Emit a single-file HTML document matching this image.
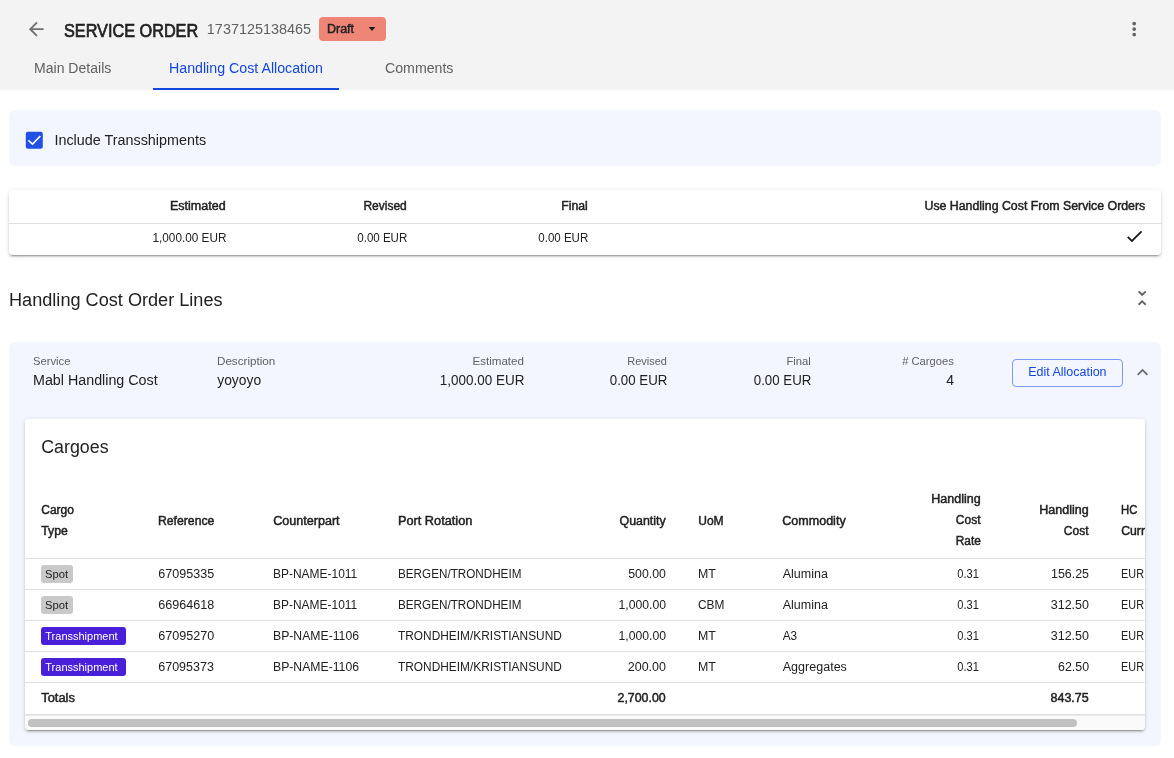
<!DOCTYPE html>
<html><head><meta charset="utf-8">
<style>
*{box-sizing:border-box;margin:0;padding:0}
html,body{width:1174px;height:758px;overflow:hidden;background:#fff;font-family:"Liberation Sans",sans-serif;color:#212121}
.abs{position:absolute}
.t{position:absolute;white-space:nowrap;line-height:20px;height:20px}
.clip{position:absolute;left:0;top:0;width:1145px;height:758px;overflow:hidden;will-change:transform}
</style></head><body>
<div class="abs" style="left:0;top:0;width:1174px;height:90px;background:#f3f3f3"></div>
<svg class="abs" style="left:25px;top:18px" width="23" height="23"><g transform="translate(0.3 0.2) scale(0.9167)"><path d="M20 11H7.83l5.59-5.59L12 4l-8 8 8 8 1.41-1.41L7.83 13H20v-2z" fill="#707070"/></g></svg>
<div class="abs" style="left:319px;top:17px;width:67px;height:24px;background:#ee8577;border-radius:4px"></div>
<svg class="abs" style="left:367px;top:26px" width="10" height="6" viewBox="0 0 10 6"><path d="M1.7 1.1h6.6L5 5.1z" fill="#1c1c1c"/></svg>
<svg class="abs" style="left:1123px;top:18px" width="23" height="23"><g transform="translate(0.2 0.1) scale(0.9167)"><circle cx="12" cy="6" r="2" fill="#626262"/><circle cx="12" cy="12" r="2" fill="#626262"/><circle cx="12" cy="18" r="2" fill="#626262"/></g></svg>
<div class="abs" style="left:153px;top:88px;width:186px;height:2px;background:#1247e2"></div>
<div class="abs" style="left:9px;top:110px;width:1152px;height:56px;background:#f3f6fe;border-radius:6px"></div>
<svg class="abs" style="left:25px;top:131px" width="18" height="18"><g transform="translate(0.8 0.8) scale(0.9444)"><rect width="18" height="18" rx="2.2" fill="#2050e6"/><path d="M2.7 9.1L7.1 13.1 15.4 4.5" stroke="#fff" stroke-width="1.7" fill="none"/></g></svg>
<div class="abs" style="left:9px;top:190px;width:1152px;height:65px;background:#fff;border-radius:4px;box-shadow:0 3px 1px -2px rgba(0,0,0,.2),0 2px 2px 0 rgba(0,0,0,.14),0 1px 5px 0 rgba(0,0,0,.12)"></div>
<div class="abs" style="left:9px;top:223px;width:1152px;height:1px;background:#e0e0e0"></div>
<svg class="abs" style="left:1124px;top:226px" width="22" height="22"><g transform="translate(0.2 0) scale(0.8542)"><path d="M9 16.17L4.83 12l-1.42 1.41L9 19 21 7l-1.41-1.41z" fill="#151515"/></g></svg>
<svg class="abs" style="left:1131px;top:287px" width="23" height="23"><g transform="translate(0.15 0.05) scale(0.9167)"><path d="M7.41 18.59L8.83 20 12 16.83 15.17 20l1.41-1.41L12 14l-4.59 4.59zm9.18-13.18L15.17 4 12 7.17 8.83 4 7.41 5.41 12 10l4.59-4.59z" fill="#636363"/></g></svg>
<div class="abs" style="left:9px;top:342px;width:1152px;height:404px;background:#f3f6fe;border-radius:6px"></div>
<div class="abs" style="left:1012px;top:359px;width:111px;height:28px;border:1px solid #7b9af0;border-radius:4px"></div>
<svg class="abs" style="left:1131px;top:361px" width="23" height="23"><g transform="translate(0.55 0.3) scale(0.9167)"><path d="M7.41 15.41L12 10.83l4.59 4.58L18 14l-6-6-6 6z" fill="#6b6b6b"/></g></svg>
<div class="abs" style="left:25px;top:419px;width:1120px;height:311px;background:#fff;border-radius:4px;box-shadow:0 3px 1px -2px rgba(0,0,0,.2),0 2px 2px 0 rgba(0,0,0,.14),0 1px 5px 0 rgba(0,0,0,.12)"></div>
<div class="abs" style="left:25px;top:558px;width:1120px;height:1px;background:#e0e0e0"></div>
<div class="abs" style="left:41px;top:565px;width:32px;height:18px;background:#c9c9c9;border-radius:3px"></div>
<div class="abs" style="left:25px;top:589px;width:1120px;height:1px;background:#e0e0e0"></div>
<div class="abs" style="left:41px;top:596px;width:32px;height:18px;background:#c9c9c9;border-radius:3px"></div>
<div class="abs" style="left:25px;top:620px;width:1120px;height:1px;background:#e0e0e0"></div>
<div class="abs" style="left:41px;top:627px;width:85px;height:18px;background:#4a1fd9;border-radius:3px"></div>
<div class="abs" style="left:25px;top:651px;width:1120px;height:1px;background:#e0e0e0"></div>
<div class="abs" style="left:41px;top:658px;width:85px;height:18px;background:#4a1fd9;border-radius:3px"></div>
<div class="abs" style="left:25px;top:682px;width:1120px;height:1px;background:#e0e0e0"></div>
<div class="abs" style="left:25px;top:714px;width:1120px;height:1px;background:#e0e0e0"></div>
<div class="abs" style="left:25px;top:715px;width:1120px;height:1px;background:#ebebeb;z-index:1"></div>
<div class="abs" style="left:25px;top:715px;width:1120px;height:15px;background:#fafafa;border-radius:0 0 4px 4px"></div>
<div class="abs" style="left:28px;top:719px;width:1049px;height:8px;background:#c1c1c1;border-radius:4px"></div>
<div class="clip">
<div class="t" id="t0" style="top:21px;font-size:18px;color:#212121;font-weight:500;left:63.6px;transform:translateX(0.03px) scaleX(0.9021);transform-origin:left center;-webkit-text-stroke:0.68px currentColor;">SERVICE ORDER</div>
<div class="t" id="t1" style="top:19px;font-size:14px;color:#616161;left:207px;transform:translateX(-0.14px) scaleX(1.0287);transform-origin:left center;">1737125138465</div>
<div class="t" id="t2" style="top:19px;font-size:12px;color:#212121;font-weight:500;left:327px;transform:translateX(-0.03px) scaleX(1.0392);transform-origin:left center;-webkit-text-stroke:0.46px currentColor;">Draft</div>
<div class="t" id="t3" style="top:58px;font-size:14px;color:#616161;left:34px;transform:translateX(-0.00px) scaleX(1.0033);transform-origin:left center;">Main Details</div>
<div class="t" id="t4" style="top:58px;font-size:14px;color:#1247e2;left:169px;transform:translateX(-0.01px) scaleX(1.0150);transform-origin:left center;">Handling Cost Allocation</div>
<div class="t" id="t5" style="top:58px;font-size:14px;color:#616161;left:385px;transform:translateX(-0.01px) scaleX(1.0113);transform-origin:left center;">Comments</div>
<div class="t" id="t6" style="top:130px;font-size:14px;color:#212121;left:54.5px;transform:translateX(-0.53px) scaleX(1.0256);transform-origin:left center;">Include Transshipments</div>
<div class="t" id="t7" style="top:196px;font-size:12px;color:#212121;font-weight:500;right:919px;transform:translateX(-0.73px) scaleX(1.0431);transform-origin:right center;-webkit-text-stroke:0.46px currentColor;">Estimated</div>
<div class="t" id="t8" style="top:196px;font-size:12px;color:#212121;font-weight:500;right:738px;transform:translateX(-0.25px) scaleX(1.0000);transform-origin:right center;-webkit-text-stroke:0.46px currentColor;">Revised</div>
<div class="t" id="t9" style="top:196px;font-size:12px;color:#212121;font-weight:500;right:557px;transform:translateX(-0.24px) scaleX(1.0202);transform-origin:right center;-webkit-text-stroke:0.46px currentColor;">Final</div>
<div class="t" id="t10" style="top:196px;font-size:12px;color:#212121;font-weight:500;right:0px;transform:translateX(0.50px) scaleX(1.0281);transform-origin:right center;-webkit-text-stroke:0.46px currentColor;">Use Handling Cost From Service Orders</div>
<div class="t" id="t11" style="top:228px;font-size:12px;color:#212121;right:919px;transform:translateX(-0.01px) scaleX(0.9797);transform-origin:right center;">1,000.00 EUR</div>
<div class="t" id="t12" style="top:228px;font-size:12px;color:#212121;right:738px;transform:translateX(0.23px) scaleX(0.9608);transform-origin:right center;">0.00 EUR</div>
<div class="t" id="t13" style="top:228px;font-size:12px;color:#212121;right:557px;transform:translateX(0.23px) scaleX(0.9608);transform-origin:right center;">0.00 EUR</div>
<div class="t" id="t14" style="top:290px;font-size:18px;color:#212121;left:9px;transform:translateX(-0.01px) scaleX(1.0071);transform-origin:left center;">Handling Cost Order Lines</div>
<div class="t" id="t15" style="top:351px;font-size:11px;color:#616161;left:33px;transform:translateX(-0.01px) scaleX(1.0210);transform-origin:left center;">Service</div>
<div class="t" id="t16" style="top:370px;font-size:14px;color:#212121;left:33px;transform:translateX(-0.02px) scaleX(1.0206);transform-origin:left center;">Mabl Handling Cost</div>
<div class="t" id="t17" style="top:351px;font-size:11px;color:#616161;left:217px;transform:translateX(-0.05px) scaleX(1.0608);transform-origin:left center;">Description</div>
<div class="t" id="t18" style="top:370px;font-size:14px;color:#212121;left:217px;transform:translateX(0.25px) scaleX(0.9886);transform-origin:left center;">yoyoyo</div>
<div class="t" id="t19" style="top:351px;font-size:11px;color:#616161;right:621px;transform:translateX(0.04px) scaleX(1.0529);transform-origin:right center;">Estimated</div>
<div class="t" id="t20" style="top:370px;font-size:14px;color:#212121;right:621px;transform:translateX(0.47px) scaleX(0.9623);transform-origin:right center;">1,000.00 EUR</div>
<div class="t" id="t21" style="top:351px;font-size:11px;color:#616161;right:478px;transform:translateX(0.00px) scaleX(1.0000);transform-origin:right center;">Revised</div>
<div class="t" id="t22" style="top:370px;font-size:14px;color:#212121;right:478px;transform:translateX(0.71px) scaleX(0.9496);transform-origin:right center;">0.00 EUR</div>
<div class="t" id="t23" style="top:351px;font-size:11px;color:#616161;right:334px;transform:translateX(0.02px) scaleX(1.0226);transform-origin:right center;">Final</div>
<div class="t" id="t24" style="top:370px;font-size:14px;color:#212121;right:334px;transform:translateX(0.71px) scaleX(0.9496);transform-origin:right center;">0.00 EUR</div>
<div class="t" id="t25" style="top:351px;font-size:11px;color:#616161;right:191px;transform:translateX(0.00px) scaleX(1.0149);transform-origin:right center;"># Cargoes</div>
<div class="t" id="t26" style="top:370px;font-size:14px;color:#212121;right:191px;transform:translateX(0.00px) scaleX(1.0000);transform-origin:right center;">4</div>
<div class="t" id="t27" style="top:362px;font-size:12.5px;color:#1247e2;left:1028.4px;transform:translateX(0.25px) scaleX(0.9968);transform-origin:left center;">Edit Allocation</div>
<div class="t" id="t28" style="top:437px;font-size:18px;color:#212121;left:41px;transform:translateX(0.26px) scaleX(0.9888);transform-origin:left center;">Cargoes</div>
<div class="t" id="t29" style="top:500px;font-size:12px;color:#212121;font-weight:500;left:41px;transform:translateX(0.25px) scaleX(1.0000);transform-origin:left center;-webkit-text-stroke:0.46px currentColor;">Cargo</div>
<div class="t" id="t30" style="top:521px;font-size:12px;color:#212121;font-weight:500;left:41px;transform:translateX(0.25px) scaleX(1.0194);transform-origin:left center;-webkit-text-stroke:0.46px currentColor;">Type</div>
<div class="t" id="t31" style="top:511px;font-size:12px;color:#212121;font-weight:500;left:158px;transform:translateX(-0.01px) scaleX(1.0183);transform-origin:left center;-webkit-text-stroke:0.46px currentColor;">Reference</div>
<div class="t" id="t32" style="top:511px;font-size:12px;color:#212121;font-weight:500;left:273px;transform:translateX(0.24px) scaleX(1.0474);transform-origin:left center;-webkit-text-stroke:0.46px currentColor;">Counterpart</div>
<div class="t" id="t33" style="top:511px;font-size:12px;color:#212121;font-weight:500;left:398px;transform:translateX(-0.05px) scaleX(1.0618);transform-origin:left center;-webkit-text-stroke:0.46px currentColor;">Port Rotation</div>
<div class="t" id="t34" style="top:511px;font-size:12px;color:#212121;font-weight:500;right:479px;transform:translateX(-0.01px) scaleX(1.0335);transform-origin:right center;-webkit-text-stroke:0.46px currentColor;">Quantity</div>
<div class="t" id="t35" style="top:511px;font-size:12px;color:#212121;font-weight:500;left:698px;transform:translateX(0.25px) scaleX(1.0000);transform-origin:left center;-webkit-text-stroke:0.46px currentColor;">UoM</div>
<div class="t" id="t36" style="top:511px;font-size:12px;color:#212121;font-weight:500;left:782px;transform:translateX(0.24px) scaleX(1.0453);transform-origin:left center;-webkit-text-stroke:0.46px currentColor;">Commodity</div>
<div class="t" id="t37" style="top:489px;font-size:12px;color:#212121;font-weight:500;right:164px;transform:translateX(-0.73px) scaleX(1.0432);transform-origin:right center;-webkit-text-stroke:0.46px currentColor;">Handling</div>
<div class="t" id="t38" style="top:510px;font-size:12px;color:#212121;font-weight:500;right:164px;transform:translateX(-0.50px) scaleX(1.0000);transform-origin:right center;-webkit-text-stroke:0.46px currentColor;">Cost</div>
<div class="t" id="t39" style="top:531px;font-size:12px;color:#212121;font-weight:500;right:164px;transform:translateX(-0.50px) scaleX(0.9898);transform-origin:right center;-webkit-text-stroke:0.46px currentColor;">Rate</div>
<div class="t" id="t40" style="top:500px;font-size:12px;color:#212121;font-weight:500;right:56px;transform:translateX(-0.73px) scaleX(1.0432);transform-origin:right center;-webkit-text-stroke:0.46px currentColor;">Handling</div>
<div class="t" id="t41" style="top:521px;font-size:12px;color:#212121;font-weight:500;right:56px;transform:translateX(-0.50px) scaleX(1.0000);transform-origin:right center;-webkit-text-stroke:0.46px currentColor;">Cost</div>
<div class="t" id="t42" style="top:500px;font-size:12px;color:#212121;font-weight:500;left:1121px;transform:translateX(0.05px) scaleX(0.9394);transform-origin:left center;-webkit-text-stroke:0.46px currentColor;">HC</div>
<div class="t" id="t43" style="top:521px;font-size:12px;color:#212121;font-weight:500;left:1121px;transform:translateX(0.25px) scaleX(1.0174);transform-origin:left center;-webkit-text-stroke:0.46px currentColor;">Curr</div>
<div class="t" id="t44" style="top:564px;font-size:11px;color:#212121;left:45px;transform:translateX(0.08px) scaleX(1.0189);transform-origin:left center;">Spot</div>
<div class="t" id="t45" style="top:564px;font-size:12px;color:#212121;left:158px;transform:translateX(0.23px) scaleX(1.0476);transform-origin:left center;">67095335</div>
<div class="t" id="t46" style="top:564px;font-size:12px;color:#212121;left:273px;transform:translateX(0.00px) scaleX(0.9970);transform-origin:left center;">BP-NAME-1011</div>
<div class="t" id="t47" style="top:564px;font-size:12px;color:#212121;left:398px;transform:translateX(0.03px) scaleX(0.9739);transform-origin:left center;">BERGEN/TRONDHEIM</div>
<div class="t" id="t48" style="top:564px;font-size:12px;color:#212121;right:479px;transform:translateX(0.26px) scaleX(1.0280);transform-origin:right center;">500.00</div>
<div class="t" id="t49" style="top:564px;font-size:12px;color:#212121;left:698px;transform:translateX(-0.03px) scaleX(1.0310);transform-origin:left center;">MT</div>
<div class="t" id="t50" style="top:564px;font-size:12px;color:#212121;left:782.6px;transform:translateX(-0.25px) scaleX(1.0402);transform-origin:left center;">Alumina</div>
<div class="t" id="t51" style="top:564px;font-size:12px;color:#212121;right:164px;transform:translateX(-2.53px) scaleX(0.9225);transform-origin:right center;">0.31</div>
<div class="t" id="t52" style="top:564px;font-size:12px;color:#212121;right:56px;transform:translateX(0.27px) scaleX(1.0355);transform-origin:right center;">156.25</div>
<div class="t" id="t53" style="top:564px;font-size:12px;color:#212121;left:1121px;transform:translateX(0.10px) scaleX(0.9033);transform-origin:left center;">EUR</div>
<div class="t" id="t54" style="top:595px;font-size:11px;color:#212121;left:45px;transform:translateX(0.08px) scaleX(1.0189);transform-origin:left center;">Spot</div>
<div class="t" id="t55" style="top:595px;font-size:12px;color:#212121;left:158px;transform:translateX(0.23px) scaleX(1.0476);transform-origin:left center;">66964618</div>
<div class="t" id="t56" style="top:595px;font-size:12px;color:#212121;left:273px;transform:translateX(0.00px) scaleX(0.9970);transform-origin:left center;">BP-NAME-1011</div>
<div class="t" id="t57" style="top:595px;font-size:12px;color:#212121;left:398px;transform:translateX(0.03px) scaleX(0.9739);transform-origin:left center;">BERGEN/TRONDHEIM</div>
<div class="t" id="t58" style="top:595px;font-size:12px;color:#212121;right:479px;transform:translateX(0.26px) scaleX(1.0166);transform-origin:right center;">1,000.00</div>
<div class="t" id="t59" style="top:595px;font-size:12px;color:#212121;left:698px;transform:translateX(0.00px) scaleX(0.9901);transform-origin:left center;">CBM</div>
<div class="t" id="t60" style="top:595px;font-size:12px;color:#212121;left:782.6px;transform:translateX(-0.25px) scaleX(1.0402);transform-origin:left center;">Alumina</div>
<div class="t" id="t61" style="top:595px;font-size:12px;color:#212121;right:164px;transform:translateX(-2.53px) scaleX(0.9225);transform-origin:right center;">0.31</div>
<div class="t" id="t62" style="top:595px;font-size:12px;color:#212121;right:56px;transform:translateX(0.27px) scaleX(1.0420);transform-origin:right center;">312.50</div>
<div class="t" id="t63" style="top:595px;font-size:12px;color:#212121;left:1121px;transform:translateX(0.10px) scaleX(0.9033);transform-origin:left center;">EUR</div>
<div class="t" id="t64" style="top:626px;font-size:11px;color:#fff;left:45.3px;transform:translateX(0.00px) scaleX(1.0000);transform-origin:left center;">Transshipment</div>
<div class="t" id="t65" style="top:626px;font-size:12px;color:#212121;left:158px;transform:translateX(0.23px) scaleX(1.0476);transform-origin:left center;">67095270</div>
<div class="t" id="t66" style="top:626px;font-size:12px;color:#212121;left:273px;transform:translateX(-0.02px) scaleX(1.0181);transform-origin:left center;">BP-NAME-1106</div>
<div class="t" id="t67" style="top:626px;font-size:12px;color:#212121;left:398px;transform:translateX(0.00px) scaleX(0.9909);transform-origin:left center;">TRONDHEIM/KRISTIANSUND</div>
<div class="t" id="t68" style="top:626px;font-size:12px;color:#212121;right:479px;transform:translateX(0.26px) scaleX(1.0166);transform-origin:right center;">1,000.00</div>
<div class="t" id="t69" style="top:626px;font-size:12px;color:#212121;left:698px;transform:translateX(-0.03px) scaleX(1.0310);transform-origin:left center;">MT</div>
<div class="t" id="t70" style="top:626px;font-size:12px;color:#212121;left:782.6px;transform:translateX(-0.25px) scaleX(0.9825);transform-origin:left center;">A3</div>
<div class="t" id="t71" style="top:626px;font-size:12px;color:#212121;right:164px;transform:translateX(-2.53px) scaleX(0.9225);transform-origin:right center;">0.31</div>
<div class="t" id="t72" style="top:626px;font-size:12px;color:#212121;right:56px;transform:translateX(0.27px) scaleX(1.0420);transform-origin:right center;">312.50</div>
<div class="t" id="t73" style="top:626px;font-size:12px;color:#212121;left:1121px;transform:translateX(0.10px) scaleX(0.9033);transform-origin:left center;">EUR</div>
<div class="t" id="t74" style="top:657px;font-size:11px;color:#fff;left:45.3px;transform:translateX(0.00px) scaleX(1.0000);transform-origin:left center;">Transshipment</div>
<div class="t" id="t75" style="top:657px;font-size:12px;color:#212121;left:158px;transform:translateX(0.23px) scaleX(1.0429);transform-origin:left center;">67095373</div>
<div class="t" id="t76" style="top:657px;font-size:12px;color:#212121;left:273px;transform:translateX(-0.02px) scaleX(1.0181);transform-origin:left center;">BP-NAME-1106</div>
<div class="t" id="t77" style="top:657px;font-size:12px;color:#212121;left:398px;transform:translateX(0.00px) scaleX(0.9909);transform-origin:left center;">TRONDHEIM/KRISTIANSUND</div>
<div class="t" id="t78" style="top:657px;font-size:12px;color:#212121;right:479px;transform:translateX(0.27px) scaleX(1.0420);transform-origin:right center;">200.00</div>
<div class="t" id="t79" style="top:657px;font-size:12px;color:#212121;left:698px;transform:translateX(-0.03px) scaleX(1.0310);transform-origin:left center;">MT</div>
<div class="t" id="t80" style="top:657px;font-size:12px;color:#212121;left:782.6px;transform:translateX(-0.25px) scaleX(1.0449);transform-origin:left center;">Aggregates</div>
<div class="t" id="t81" style="top:657px;font-size:12px;color:#212121;right:164px;transform:translateX(-2.53px) scaleX(0.9225);transform-origin:right center;">0.31</div>
<div class="t" id="t82" style="top:657px;font-size:12px;color:#212121;right:56px;transform:translateX(0.02px) scaleX(1.0345);transform-origin:right center;">62.50</div>
<div class="t" id="t83" style="top:657px;font-size:12px;color:#212121;left:1121px;transform:translateX(0.10px) scaleX(0.9033);transform-origin:left center;">EUR</div>
<div class="t" id="t84" style="top:688px;font-size:12px;color:#212121;font-weight:500;left:41px;transform:translateX(0.25px) scaleX(1.0720);transform-origin:left center;-webkit-text-stroke:0.46px currentColor;">Totals</div>
<div class="t" id="t85" style="top:688px;font-size:12px;color:#212121;font-weight:500;right:479px;transform:translateX(0.01px) scaleX(1.0324);transform-origin:right center;-webkit-text-stroke:0.46px currentColor;">2,700.00</div>
<div class="t" id="t86" style="top:688px;font-size:12px;color:#212121;font-weight:500;right:56px;transform:translateX(0.01px) scaleX(1.0414);transform-origin:right center;-webkit-text-stroke:0.46px currentColor;">843.75</div>
</div>
</body></html>
